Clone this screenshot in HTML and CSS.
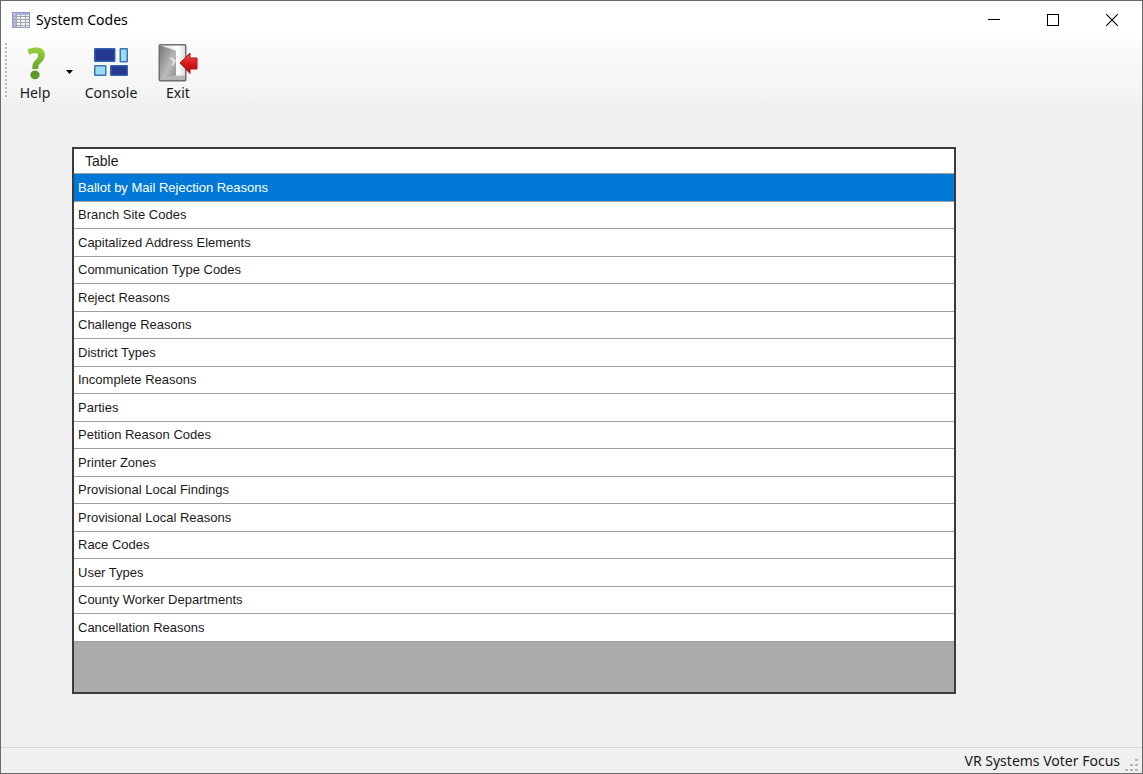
FILE: index.html
```html
<!DOCTYPE html>
<html lang="en">
<head>
  <meta charset="UTF-8">
  <meta name="viewport" content="width=device-width, initial-scale=1.0">
  <title>System Codes</title>
  <link rel="stylesheet" href="styles.css">
</head>
<body>

<div class="window">
  <header class="titlebar">
    <svg class="app-icon" width="18" height="16" viewBox="0 0 18 16">
      <rect x="0.5" y="0.5" width="17" height="15" fill="#f4f4f6" stroke="#8d99cc"/>
      <path d="M1 2h16" stroke="#a9b4dc" stroke-width="2"/>
      <path d="M2.500 1v14" stroke="#b4bde0" stroke-width="3"/>
      <path d="M1 4.500h16M1 7.500h16M1 10.500h16M1 13.500h16M4.500 1v14M8.500 3v12M13.500 3v12" stroke="#a2a4ac"/>
    </svg>
    <h1>System Codes</h1>
    <div class="window-buttons">
      <button aria-label="Minimize"><svg width="12" height="12" viewBox="0 0 12 12"><path d="M0 5.500h12" stroke="#000"/></svg></button>
      <button aria-label="Maximize"><svg width="12" height="12" viewBox="0 0 12 12"><rect x="0.5" y="0.5" width="11" height="11" fill="none" stroke="#000"/></svg></button>
      <button aria-label="Close"><svg width="12" height="12" viewBox="0 0 12 12"><path d="M0 0l12 12M12 0L0 12" stroke="#000" stroke-width="1.100"/></svg></button>
    </div>
  </header>

  <nav class="toolbar">
    <div class="grip"></div>
    <button class="tool tool-help">
      <svg width="40" height="40" viewBox="0 0 40 40">
        <defs>
          <linearGradient id="green" x1="0" y1="0" x2="0" y2="1">
            <stop offset="0" stop-color="#97cf3c"/>
            <stop offset="1" stop-color="#6aa82c"/>
          </linearGradient>
        </defs>
        <path d="M12.500 6.300C16 4.900 19.500 4.500 22 4.600C27 4.800 30 7.800 29.800 12.400C29.600 16.500 27.300 18.500 25.100 20.500C23.600 21.900 23.300 23.300 23.200 25.900H17.300C17.200 22 17.900 19.900 20.100 17.500C21.900 15.600 23.100 14.500 23.100 12.500C23.100 10.500 21.800 9.900 19.800 9.900C17.800 9.900 16.100 10.600 14.200 11.700Z" fill="url(#green)"/>
        <ellipse cx="20" cy="31.800" rx="4.700" ry="4.400" fill="#5d982d"/>
      </svg>
      <span>Help</span>
    </button>
    <button class="tool-arrow" aria-label="More help">
      <svg width="7" height="4" viewBox="0 0 7 4"><path d="M0 0h7L3.500 4z" fill="#000"/></svg>
    </button>
    <button class="tool tool-console">
      <svg width="40" height="40" viewBox="0 0 40 40">
        <g stroke-width="1.500">
          <rect x="3.750" y="5.750" width="20" height="12.500" rx="0.500" fill="#26378f" stroke="#3060b4"/>
          <rect x="29.250" y="5.750" width="7" height="13" rx="0.500" fill="#9adcf5" stroke="#3c74b8"/>
          <rect x="3.750" y="22.750" width="11" height="9.500" rx="0.500" fill="#9adcf5" stroke="#3c74b8"/>
          <rect x="19.750" y="22.750" width="16.500" height="9.500" rx="0.500" fill="#26378f" stroke="#3060b4"/>
        </g>
      </svg>
      <span>Console</span>
    </button>
    <button class="tool tool-exit">
      <svg width="40" height="40" viewBox="0 0 40 40">
        <defs>
          <linearGradient id="door" x1="0" y1="0" x2="1" y2="1">
            <stop offset="0" stop-color="#777"/>
            <stop offset="0.6" stop-color="#bbb"/>
            <stop offset="1" stop-color="#888"/>
          </linearGradient>
          <linearGradient id="frame" x1="0" y1="0" x2="1" y2="0">
            <stop offset="0" stop-color="#ddd"/>
            <stop offset="0.7" stop-color="#fff"/>
            <stop offset="1" stop-color="#ddd"/>
          </linearGradient>
          <linearGradient id="red" x1="0" y1="0" x2="0" y2="1">
            <stop offset="0" stop-color="#ef5550"/>
            <stop offset="0.5" stop-color="#d9191c"/>
            <stop offset="1" stop-color="#a80d10"/>
          </linearGradient>
        </defs>
        <rect x="1.250" y="1.750" width="26.500" height="36" rx="1" fill="url(#frame)" stroke="#707070" stroke-width="1.500"/>
        <path d="M2 2.500L18 7.500V32.500L2 37Z" fill="url(#door)"/>
        <path d="M2 37L18 32.500H27V37Z" fill="#b5b5b5"/>
        <path d="M12.500 15L17 18L14 22.500" fill="none" stroke="#e8e8e8" stroke-width="1.600"/>
        <path d="M22 20L32 10V15H39V26H32V30.500Z" fill="url(#red)" stroke="#b11216"/>
      </svg>
      <span>Exit</span>
    </button>
  </nav>

  <main class="content">
    <div class="grid">
      <table>
        <thead>
          <tr><th>Table</th></tr>
        </thead>
        <tbody>
          <tr class="selected"><td>Ballot by Mail Rejection Reasons</td></tr>
          <tr><td>Branch Site Codes</td></tr>
          <tr><td>Capitalized Address Elements</td></tr>
          <tr><td>Communication Type Codes</td></tr>
          <tr><td>Reject Reasons</td></tr>
          <tr><td>Challenge Reasons</td></tr>
          <tr><td>District Types</td></tr>
          <tr><td>Incomplete Reasons</td></tr>
          <tr><td>Parties</td></tr>
          <tr><td>Petition Reason Codes</td></tr>
          <tr><td>Printer Zones</td></tr>
          <tr><td>Provisional Local Findings</td></tr>
          <tr><td>Provisional Local Reasons</td></tr>
          <tr><td>Race Codes</td></tr>
          <tr><td>User Types</td></tr>
          <tr><td>County Worker Departments</td></tr>
          <tr><td>Cancellation Reasons</td></tr>
        </tbody>
      </table>
    </div>
  </main>

  <footer class="statusbar">
    <span>VR Systems Voter Focus</span>
    <svg width="14" height="14" viewBox="0 0 14 14" fill="#b4b4b4">
      <path d="M10 0h3v2h-3zM5 5h3v2H5zM10 5h3v2h-3zM0 10h3v2H0zM5 10h3v2H5zM10 10h3v2h-3z"/>
    </svg>
  </footer>
</div>

</body>
</html>
```
FILE: styles.css
```css
* { box-sizing: border-box; }
body { margin: 0; font-family: "Noto Sans", "Open Sans", sans-serif; font-size: 14px; color: #1a1a1a; background: #f0f0f0; }
button { border: none; padding: 0; background: none; font: inherit; color: inherit; }
svg { display: block; }

.window { min-height: 100vh; display: flex; flex-direction: column; border: 1px solid #6b696b; }

.titlebar { height: 38px; display: flex; align-items: center; padding: 0 1px 0 11px; background: #fff; }
.titlebar h1 { margin: 0 0 0 6px; font-size: 14px; font-weight: normal; line-height: 20px; color: #000; }
.window-buttons { margin-left: auto; display: flex; align-self: stretch; }
.window-buttons button { width: 59px; display: flex; align-items: center; justify-content: center; }

.toolbar { height: 67px; display: flex; align-items: flex-start; padding: 4px 3px 0 4px; background: linear-gradient(#fdfdfd, #f7f7f7 40%, #f5f5f5 80%, #f0f0f0); }
.grip { width: 2px; height: 54px; background: repeating-linear-gradient(#b8b8b8 0 2px, transparent 2px 4px); }
.tool { display: flex; flex-direction: column; align-items: center; line-height: 20px; }
.tool-help { width: 56px; }
.tool-arrow { width: 12px; height: 58px; display: flex; align-items: center; justify-content: center; }
.tool-console { width: 72px; }
.tool-exit { width: 62px; }

.content { flex: 1; display: flex; padding: 41px 186px 53px 71px; }
.grid { flex: 1; border: 2px solid #3c3c3c; background: #ababab; }
table { width: 100%; border-collapse: separate; border-spacing: 0; font-family: "Liberation Sans", Arial, sans-serif; font-size: 14px; line-height: 20px; background: #fff; }
th, td { padding: 0 4px; border-bottom: 1px solid #a0a0a0; text-align: left; font-weight: normal; }
th { height: 25px; padding-left: 11px; }
td { height: 27px; font-size: 13px; }
tr:nth-child(odd) td { height: 28px; }
.selected td { background: #0078d7; color: #fff; }

.statusbar { height: 26px; display: flex; align-items: center; justify-content: flex-end; gap: 5px; padding-right: 3px; border-top: 1px solid #d7d7d7; }
.statusbar svg { align-self: flex-end; }
```
